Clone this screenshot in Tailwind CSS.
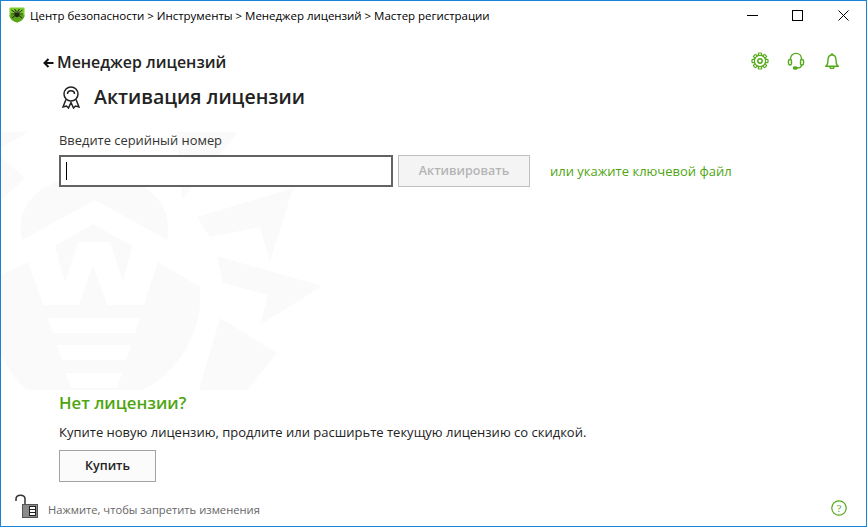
<!DOCTYPE html>
<html lang="ru">
<head>
  <meta charset="UTF-8">
  <title>Мастер регистрации</title>
  <script src="https://cdn.jsdelivr.net/npm/@tailwindcss/browser@4"></script>
</head>
<body class="bg-white">
  <div class="relative flex flex-col w-[867px] h-[527px] overflow-hidden bg-white border border-[#1883d7] font-['Open_Sans','Noto_Sans',sans-serif] text-[#222]">
    <!-- watermark -->
    <svg class="absolute left-[-1px] top-[99px]" width="330" height="310" viewBox="0 100 330 310" fill="#fafafa">
      <path d="M22 240 L95 200 L167 240 C174 205 150 176 95 176 C40 176 14 205 22 240 Z"/>
      <path d="M55 246 L93 224 L132 246 L123 282 L110 242 L78 242 L65 282 Z"/>
      <path d="M1 275 L28 262 L43 305 L79 305 L93 265 L107 305 L144 305 L158 262 L200 287 C204 330 180 370 143 390 L27 390 C15 380 5 365 1 353 Z M48 318 L53 333 L135 333 L140 318 Z M57 345 L62 360 L126 360 L131 345 Z M66 373 L71 388 L117 388 L122 373 Z" fill-rule="evenodd"/>
      <path d="M197 217 L293 188 L270 262 L260 227 L210 237 Z"/>
      <path d="M217 256 L322 286 L260 325 L268 295 L223 283 Z"/>
      <path d="M220 318 L277 353 L247 390 L199 390 Z"/>
      <path d="M1 157 L25 178 L1 200 Z"/>
      <path d="M1 132 L28 132 L1 148 Z"/>
      <path d="M177 132 L238 132 L182 199 Z"/>
    </svg>

    <!-- title bar -->
    <header class="relative flex items-center h-[30px] shrink-0 pl-[8px]">
      <svg class="mb-[2px]" width="16" height="16" viewBox="0 0 16 16">
        <path d="M1.5 0.5 H14.5 Q15.5 0.5 15.5 1.5 V8 C15.5 12 11.5 14.5 8 15.5 C4.5 14.5 0.5 12 0.5 8 V1.5 Q0.5 0.5 1.5 0.5 Z" fill="#7ecb2b"/>
        <path d="M0.5 8 C0.5 12 4.5 14.5 8 15.5 C11.5 14.5 15.5 12 15.5 8 Z" fill="#5ba51c"/>
        <path d="M2.5 3 L6 5.5 M13.5 3 L10 5.5 M2 7 H6 M14 7 H10 M3 11 L6 8.5 M13 11 L10 8.5 M5.5 2 L7 4 M10.5 2 L9 4" stroke="#1c2a10" stroke-width="1"/>
        <ellipse cx="8" cy="7" rx="2.4" ry="3.2" fill="#1c2a10"/>
        <rect x="6.5" y="4.5" width="1" height="1" fill="#e8f5d0"/>
        <rect x="8.5" y="4.5" width="1" height="1" fill="#e8f5d0"/>
      </svg>
      <span class="ml-[5px] text-[11.5px] tracking-[-0.03px] text-black">Центр безопасности &gt; Инструменты &gt; Менеджер лицензий &gt; Мастер регистрации</span>
      <div class="ml-auto flex items-center mb-[2px]">
        <svg class="mr-[34px]" width="11" height="11" viewBox="0 0 11 11"><path d="M0 5.5 H11" stroke="#000"/></svg>
        <svg class="mr-[35px]" width="11" height="11" viewBox="0 0 11 11"><rect x="0.5" y="0.5" width="10" height="10" fill="none" stroke="#000"/></svg>
        <svg class="mr-[17px]" width="11" height="11" viewBox="0 0 11 11"><path d="M0.5 0.5 L10.5 10.5 M10.5 0.5 L0.5 10.5" stroke="#000"/></svg>
      </div>
    </header>

    <!-- top row -->
    <div class="relative flex items-center h-[32px] pl-[42px] pr-[25px] mt-[16px] shrink-0">
      <svg width="11" height="10" viewBox="0 0 11 10" fill="none" stroke="#111" stroke-width="2"><path d="M10.5 5 H2 M5.5 1 L1.5 5 L5.5 9"/></svg>
      <span class="ml-[3px] text-[15.9px] font-semibold text-[#222]">Менеджер лицензий</span>
      <div class="ml-auto flex items-center gap-[18px] mb-[4px] text-[#55a91a]">
        <svg width="18" height="18" viewBox="0 0 18 18" fill="none" stroke="currentColor" stroke-width="1.2">
          <g transform="translate(9 9)">
            <rect x="-1.6" y="-8" width="3.2" height="3.5" rx="0.6"/>
            <rect x="-1.6" y="-8" width="3.2" height="3.5" rx="0.6" transform="rotate(45)"/>
            <rect x="-1.6" y="-8" width="3.2" height="3.5" rx="0.6" transform="rotate(90)"/>
            <rect x="-1.6" y="-8" width="3.2" height="3.5" rx="0.6" transform="rotate(135)"/>
            <rect x="-1.6" y="-8" width="3.2" height="3.5" rx="0.6" transform="rotate(180)"/>
            <rect x="-1.6" y="-8" width="3.2" height="3.5" rx="0.6" transform="rotate(225)"/>
            <rect x="-1.6" y="-8" width="3.2" height="3.5" rx="0.6" transform="rotate(270)"/>
            <rect x="-1.6" y="-8" width="3.2" height="3.5" rx="0.6" transform="rotate(315)"/>
            <circle r="5.6" fill="#fff"/>
            <circle r="2.2" stroke-width="1.5"/>
          </g>
        </svg>
        <svg width="18" height="18" viewBox="0 0 18 18" fill="none" stroke="currentColor" stroke-width="1.4">
          <path d="M3.5 8 V7 C3.5 -0.5 14.5 -0.5 14.5 7 V8"/>
          <rect x="1.5" y="7.5" width="3" height="5.5" rx="1.5"/>
          <rect x="13.5" y="7.5" width="3" height="5.5" rx="1.5"/>
          <path d="M14.5 13 C14.5 15.5 12.5 16 10 16"/>
          <rect x="6.5" y="15" width="3.5" height="2" rx="1" fill="currentColor"/>
        </svg>
        <svg width="18" height="18" viewBox="0 0 18 18" fill="none" stroke="currentColor" stroke-width="1.4">
          <path d="M2 14.2 H16 M3.5 14 C5 12 5 10 5 8 C5 5 6.5 3 9 3 C11.5 3 13 5 13 8 C13 10 13 12 14.5 14"/>
          <path d="M9 1 V3 M7 15 C7 17 11 17 11 15"/>
        </svg>
      </div>
    </div>

    <!-- page title -->
    <div class="relative flex items-center h-[36px] pl-[61px] shrink-0">
      <svg width="18" height="23" viewBox="0 0 18 23" fill="none" stroke="#222" stroke-width="1.5">
        <circle cx="9" cy="8" r="7"/>
        <path d="M5.5 8 C5.5 3.5 12.5 3.5 12.5 8"/>
        <path d="M4 13.5 L1 21 L4.5 20 L6.5 22 L9 16.5 L11.5 22 L13.5 20 L17 21 L14 13.5"/>
      </svg>
      <h1 class="ml-[14px] text-[19.5px] font-semibold text-[#222]">Активация лицензии</h1>
    </div>

    <!-- serial form -->
    <div class="relative pl-[58px] pt-[16px]">
      <label class="block text-[12.9px] leading-[18px] text-[#333]">Введите серийный номер</label>
      <div class="flex items-center mt-[6px]">
        <div class="flex items-center w-[334px] h-[32px] pl-[5px] bg-white border-2 border-[#636363]">
          <div class="w-px h-[18px] bg-black"></div>
        </div>
        <button class="w-[132px] h-[32px] ml-[5px] pt-[1px] bg-[#f4f4f4] border border-[#c0c0c0] text-[12.5px] font-semibold text-[#b5b5b5]">Активировать</button>
        <a class="ml-[20px] pt-[1px] text-[13px] text-[#4ea50f]">или укажите ключевой файл</a>
      </div>
    </div>

    <!-- no license -->
    <div class="relative mt-auto pl-[58px]">
      <h2 class="text-[16.75px] leading-[22px] font-semibold text-[#4ea50f]">Нет лицензии?</h2>
      <p class="mt-[9px] text-[13px] leading-[18px] text-[#222]">Купите новую лицензию, продлите или расширьте текущую лицензию со скидкой.</p>
      <button class="block w-[97px] h-[32px] mt-[9px] bg-[#fbfbfb] border border-[#a3a3a3] text-[12.5px] font-semibold text-[#222]">Купить</button>
    </div>

    <!-- status bar -->
    <footer class="relative flex items-center h-[44px] pt-[12px] pl-[13px] pr-[19px] shrink-0">
      <svg class="mb-[8px]" width="25" height="26" viewBox="0 0 25 26" fill="none">
        <path d="M2 8 V6 C2 1 11 1 11 6 V12" stroke="#333" stroke-width="1.5"/>
        <rect x="8.5" y="11.5" width="15" height="13" fill="#8a8a8a" stroke="#555"/>
        <rect x="15.5" y="13.5" width="6" height="9" fill="#fff" stroke="#222"/>
        <path d="M15.5 16.5 H21.5 M15.5 19.5 H21.5" stroke="#222"/>
      </svg>
      <span class="ml-[9px] text-[11.2px] text-[#666]">Нажмите, чтобы запретить изменения</span>
      <svg class="ml-auto mb-[5px]" width="16" height="16" viewBox="0 0 16 16" fill="none">
        <circle cx="8" cy="8" r="7.2" stroke="#55a91a" stroke-width="1.2"/>
        <text x="8" y="12" text-anchor="middle" font-size="11" font-family="Liberation Serif" fill="#55a91a">?</text>
      </svg>
    </footer>
  </div>
</body>
</html>
